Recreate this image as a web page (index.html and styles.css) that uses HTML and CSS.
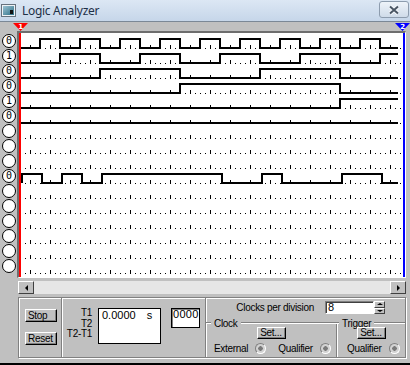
FILE: index.html
```html
<!DOCTYPE html>
<html>
<head>
    <title>Logic Analyzer</title>
    <link rel="stylesheet" href="styles.css">
</head>
<body>
    <div class="window">
        <div class="titlebar">
            <svg class="app-icon" width="15" height="15" viewBox="0 0 15 15">
                <defs>
                    <linearGradient id="icon-fill" x1="0" y1="0" x2="1" y2="1">
                        <stop offset="0" stop-color="#9cc3d4"/>
                        <stop offset="1" stop-color="#2c6f86"/>
                    </linearGradient>
                </defs>
                <rect x="0.5" y="1.5" width="14" height="12" fill="#eef2f6" stroke="#66727e"/>
                <rect x="2" y="3" width="11" height="9" fill="url(#icon-fill)"/>
                <rect x="9" y="7" width="3" height="4" fill="#111"/>
            </svg>
            <span class="title">Logic Analyzer</span>
            <button class="close">
                <svg width="12" height="10" viewBox="0 0 12 10">
                    <path d="M2 1.5 L10 8.5 M10 1.5 L2 8.5" stroke="#f4f7fb" stroke-width="4" fill="none"/>
                    <path d="M2 1.5 L10 8.5 M10 1.5 L2 8.5" stroke="#4a5664" stroke-width="2" fill="none"/>
                </svg>
            </button>
        </div>

        <div class="markers">
            <svg width="15" height="8" viewBox="0 0 15 8">
                <polygon points="0,0 15,0 7.5,8" fill="#ff0000"/>
                <text x="7.5" y="6" class="marker-num">1</text>
            </svg>
            <svg width="15" height="8" viewBox="0 0 15 8">
                <polygon points="0,0 15,0 7.5,8" fill="#0000ff"/>
                <text x="7.5" y="6" class="marker-num">2</text>
            </svg>
        </div>

        <div class="scope">
            <div class="pins">
                <div class="pin">0</div>
                <div class="pin">1</div>
                <div class="pin">0</div>
                <div class="pin">0</div>
                <div class="pin">1</div>
                <div class="pin">0</div>
                <div class="pin"></div>
                <div class="pin"></div>
                <div class="pin"></div>
                <div class="pin">0</div>
                <div class="pin"></div>
                <div class="pin"></div>
                <div class="pin"></div>
                <div class="pin"></div>
                <div class="pin"></div>
                <div class="pin"></div>
            </div>
            <div class="trace">
                <svg width="386" height="244" viewBox="19 33 386 244" shape-rendering="crispEdges">
                    <defs>
                        <pattern id="grid" patternUnits="userSpaceOnUse" x="0" y="34" width="20" height="15">
                            <rect x="0" y="14" width="1" height="1"/>
                            <rect x="5" y="14" width="1" height="1"/>
                            <rect x="10" y="11" width="1" height="4"/>
                            <rect x="15" y="14" width="1" height="1"/>
                        </pattern>
                    </defs>
                    <rect x="21" y="34" width="381" height="240" fill="url(#grid)"/>
                    <g fill="none" stroke="#000" stroke-width="2">
                        <path d="M21 48H40V39H60V48H80V39H100V48H120V39H140V48H160V39H180V48H200V39H220V48H240V39H260V48H280V39H300V48H320V39H340V48H360V39H380V48H398"/>
                        <path d="M21 63H60V54H100V63H140V54H180V63H220V54H260V63H300V54H340V63H380V54H398"/>
                        <path d="M21 78H100V69H180V78H260V69H340V78H398"/>
                        <path d="M21 93H180V84H340V93H398"/>
                        <path d="M21 108H340V99H398"/>
                        <path d="M21 123H398"/>
                        <path d="M22 183V174H42V183H62V174H82V183H102V174H222V183H262V174H282V183H342V174H382V183H398"/>
                    </g>
                    <rect x="19" y="33" width="2" height="244" fill="#ff0000"/>
                    <rect x="403" y="33" width="2" height="244" fill="#0000ff"/>
                </svg>
            </div>
        </div>

        <div class="scrollbar">
            <div class="scroll-btn"><span class="arrow-left"></span></div>
            <div class="track"></div>
            <div class="scroll-btn"><span class="arrow-right"></span></div>
        </div>

        <div class="panel">
            <div class="run">
                <button class="btn">Stop</button>
                <button class="btn">Reset</button>
            </div>
            <div class="timing">
                <div class="labels">
                    <div>T1</div>
                    <div>T2</div>
                    <div>T2-T1</div>
                </div>
                <div class="readout">0.0000<span class="unit">s</span></div>
                <div class="count">0000</div>
            </div>
            <div class="setup">
                <div class="clocks">
                    <span>Clocks per division</span>
                    <div class="spin">
                        <div class="spin-input">8</div>
                        <div class="spin-btns">
                            <div class="spin-btn"><span class="arrow-up"></span></div>
                            <div class="spin-btn"><span class="arrow-down"></span></div>
                        </div>
                    </div>
                </div>
                <div class="groups">
                    <div class="group clock-group">
                        <div class="group-title">Clock</div>
                        <div class="group-body">
                            <button class="btn btn-set">Set...</button>
                            <div class="radio-row">
                                <span>External</span>
                                <span class="radio"></span>
                                <span class="opt">Qualifier</span>
                                <span class="radio"></span>
                            </div>
                        </div>
                    </div>
                    <div class="group trigger-group">
                        <div class="group-title">Trigger</div>
                        <div class="group-body">
                            <button class="btn btn-set">Set...</button>
                            <div class="radio-row">
                                <span>Qualifier</span>
                                <span class="radio"></span>
                            </div>
                        </div>
                    </div>
                </div>
            </div>
        </div>
        <div class="bottom-edge"></div>
    </div>
</body>
</html>
```

FILE: styles.css
```css
body {
    margin: 0;
    background-color: #c0c0c0;
    font-family: "Liberation Sans", Arial, sans-serif;
    font-size: 10px;
    letter-spacing: -0.3px;
    color: #000;
}
button {
    font: inherit;
    letter-spacing: inherit;
    color: inherit;
    padding: 0;
    margin: 0;
}
.window {
    width: 410px;
    height: 365px;
    overflow: hidden;
}

/* title bar */
.titlebar {
    display: flex;
    align-items: center;
    height: 21px;
    border-bottom: 1px solid #7b8896;
    background: linear-gradient(#dce7f4, #c6d6e9);
}
.app-icon {
    flex: none;
    margin-left: 1px;
}
.title {
    margin-left: 6px;
    font-family: "Noto Sans", sans-serif;
    font-size: 12px;
    letter-spacing: -0.3px;
    color: #1d3047;
}
.close {
    align-self: flex-start;
    display: flex;
    align-items: center;
    justify-content: center;
    width: 30px;
    height: 17px;
    margin: 1px 1px 0 auto;
    border: 1px solid #8d9cae;
    border-radius: 3px;
    background: linear-gradient(#eef3f9, #cfdbe9);
}

/* cursor markers */
.markers {
    display: flex;
    justify-content: space-between;
    height: 8px;
    padding: 1px 0 0 13px;
}
.marker-num {
    fill: #fff;
    font-family: "DejaVu Sans", sans-serif;
    font-size: 7px;
    font-weight: bold;
    text-anchor: middle;
}

/* waveform area */
.scope {
    display: flex;
    height: 247px;
}
.pins {
    width: 17px;
    padding: 3px 0 0 2px;
    box-sizing: border-box;
}
.pin {
    width: 14px;
    height: 14px;
    box-sizing: border-box;
    margin-bottom: 1px;
    border: 1px solid #000;
    border-radius: 50%;
    background-color: #fff;
    font-family: "DejaVu Sans Mono", monospace;
    font-size: 10px;
    line-height: 12px;
    letter-spacing: 0;
    text-align: center;
}
.trace {
    border-left: 2px solid #6e6e6e;
    border-top: 2px solid #6e6e6e;
    border-right: 1px solid #fff;
    border-bottom: 1px solid #fff;
    background-color: #fff;
}
.trace svg {
    display: block;
}

/* scroll bar */
.scrollbar {
    display: flex;
    height: 13px;
    margin: 3px 4px 0 18px;
    background-color: #e6e6e6;
}
.scroll-btn {
    display: flex;
    align-items: center;
    justify-content: center;
    width: 16px;
    box-sizing: border-box;
    border: 1px solid;
    border-color: #fff #404040 #404040 #fff;
    background-color: #c0c0c0;
}
.track {
    flex: 1;
}
.arrow-left,
.arrow-right {
    width: 0;
    height: 0;
    border-top: 3px solid transparent;
    border-bottom: 3px solid transparent;
}
.arrow-left {
    border-right: 3px solid #000;
}
.arrow-right {
    border-left: 3px solid #000;
}

/* control panel */
.panel {
    display: flex;
    height: 59px;
    margin: 3px 4px 0 18px;
    border: 1px solid #808080;
    box-shadow: 1px 1px 0 #fff, inset 1px 1px 0 #fff;
}
.btn {
    height: 13px;
    box-sizing: border-box;
    padding-bottom: 1px;
    border: 1px solid;
    border-color: #fff #000 #000 #fff;
    box-shadow: inset -1px -1px #808080;
    background-color: #c0c0c0;
    line-height: 9px;
}
.run {
    display: flex;
    flex-direction: column;
    gap: 10px;
    width: 43px;
    box-sizing: border-box;
    padding: 11px 0 0 6px;
    border-right: 1px solid #808080;
    box-shadow: 1px 0 0 #fff;
}
.run .btn {
    width: 32px;
    text-align: left;
    padding-left: 2px;
}
.timing {
    display: flex;
    align-items: flex-start;
    width: 143px;
    padding-top: 10px;
    border-right: 1px solid #808080;
    box-shadow: 1px 0 0 #fff;
}
.labels {
    width: 30px;
    text-align: right;
    line-height: 10.5px;
}
.readout {
    width: 63px;
    height: 36px;
    box-sizing: border-box;
    margin-left: 6px;
    padding: 1px 0 0 3px;
    border: 1px solid #000;
    background-color: #fff;
    font-size: 11px;
    line-height: 11px;
    letter-spacing: 0;
}
.unit {
    margin-left: 11px;
}
.count {
    width: 29px;
    height: 20px;
    box-sizing: border-box;
    margin-left: 10px;
    padding-left: 1px;
    border: 1px solid #000;
    box-shadow: inset 1px 1px #808080;
    background-color: #fff;
    font-size: 11px;
    line-height: 11px;
    letter-spacing: 0.3px;
}
.setup {
    flex: 1;
    display: flex;
    flex-direction: column;
}
.clocks {
    display: flex;
    justify-content: flex-end;
    align-items: center;
    gap: 11px;
    height: 13px;
    padding: 3px 20px 0 0;
}
.spin {
    display: flex;
    height: 13px;
}
.spin-input {
    width: 49px;
    box-sizing: border-box;
    padding-left: 2px;
    border: 1px solid;
    border-color: #808080 #fff #fff #808080;
    box-shadow: inset 1px 1px #404040;
    background-color: #fff;
    font-size: 11px;
    line-height: 11px;
}
.spin-btns {
    display: flex;
    flex-direction: column;
    width: 11px;
}
.spin-btn {
    flex: 1;
    display: flex;
    align-items: center;
    justify-content: center;
    border: 1px solid;
    border-color: #fff #404040 #404040 #fff;
    background-color: #c0c0c0;
}
.arrow-up,
.arrow-down {
    width: 0;
    height: 0;
    border-left: 3px solid transparent;
    border-right: 3px solid transparent;
}
.arrow-up {
    border-bottom: 2px solid #000;
}
.arrow-down {
    border-top: 2px solid #000;
}
.groups {
    flex: 1;
    display: flex;
    margin-top: 4px;
}
.group {
    display: flex;
    flex-direction: column;
}
.clock-group {
    width: 130px;
}
.trigger-group {
    flex: 1;
}
.group-title {
    display: flex;
    align-items: center;
    gap: 3px;
    height: 10px;
    margin-bottom: -4px;
}
.group-title::before,
.group-title::after {
    content: "";
    border-top: 1px solid #808080;
    border-bottom: 1px solid #fff;
}
.group-title::before {
    width: 5px;
}
.group-title::after {
    flex: 1;
}
.trigger-group .group-title::before {
    width: 3px;
}
.group-body {
    flex: 1;
    display: flex;
    flex-direction: column;
    align-items: center;
    padding-top: 3px;
}
.trigger-group .group-body {
    border-left: 1px solid #808080;
    box-shadow: inset 1px 0 #fff;
}
.btn-set {
    width: 29px;
    height: 12px;
    line-height: 9px;
    text-align: center;
}
.radio-row {
    align-self: stretch;
    display: flex;
    align-items: center;
    height: 11px;
    margin-top: 4px;
    padding-left: 8px;
}
.trigger-group .radio-row {
    padding-left: 10px;
}
.radio {
    width: 11px;
    height: 11px;
    box-sizing: border-box;
    margin-left: 7px;
    border: 1px solid;
    border-color: #808080 #fff #fff #808080;
    border-radius: 50%;
    background: radial-gradient(circle, #7a7a7a 0 2px, #d2d2d2 2.5px);
}
.opt {
    margin-left: 12px;
}
.bottom-edge {
    height: 2px;
    margin-top: 5px;
    background-color: #000;
}
```
